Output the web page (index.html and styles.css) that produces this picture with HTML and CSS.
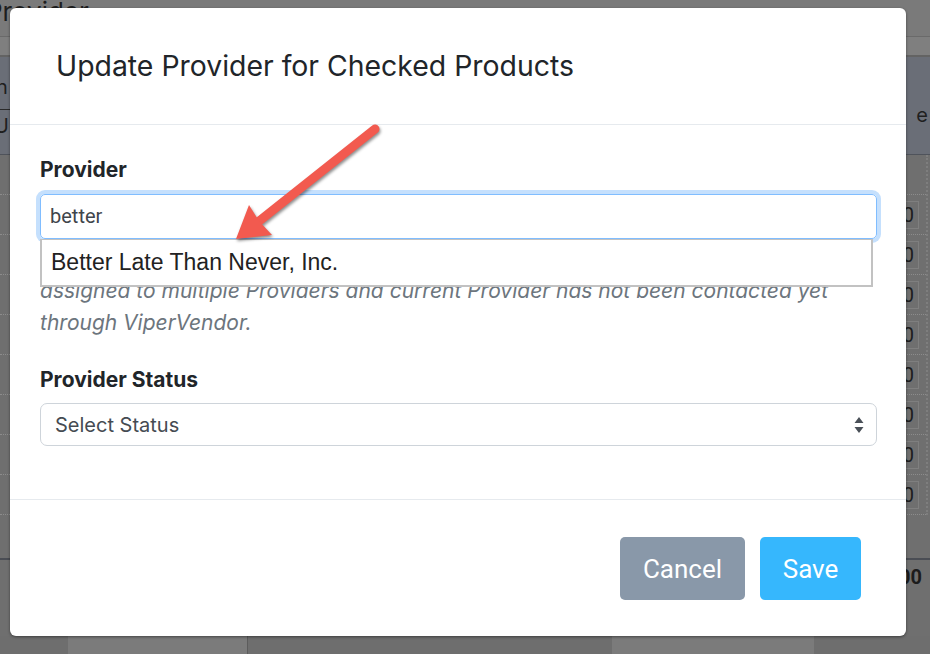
FILE: index.html
```html
<!DOCTYPE html>
<html>
<head>
<meta charset="utf-8">
<link rel="stylesheet" href="styles.css">
</head>
<body>
<div class="page">
  <div class="bg-top"><span class="bg-title">Provider</span></div>
  <div class="bg-sub"></div>
  <div class="bg-thead">
    <div class="th-left"><span class="th-n">n</span><span class="th-u">U</span></div>
    <span class="th-e">e</span>
  </div>
  <div class="bg-rows">
    <div class="row first"></div>
    <div class="row"><span class="cell">0</span></div>
    <div class="row"><span class="cell">0</span></div>
    <div class="row"><span class="cell">0</span></div>
    <div class="row"><span class="cell">0</span></div>
    <div class="row"><span class="cell">0</span></div>
    <div class="row"><span class="cell">0</span></div>
    <div class="row"><span class="cell">0</span></div>
    <div class="row"><span class="cell">0</span></div>
  </div>
  <div class="bg-gap"></div>
  <div class="bg-total"><span class="total">00</span></div>
  <div class="bg-foot">
    <span class="blk b1"></span>
    <span class="blk b2"></span>
    <span class="blk b3"></span>
  </div>
</div>

<div class="modal">
  <div class="modal-header">
    <h5 class="modal-title">Update Provider for Checked Products</h5>
  </div>
  <div class="modal-body">
    <div class="group">
      <label class="label">Provider</label>
      <div class="combo">
        <div class="input focused">better</div>
        <div class="suggest">Better Late Than Never, Inc.</div>
      </div>
      <p class="help">Provider will only be updated for the checked Products that are currently<br>assigned to multiple Providers and current Provider has not been contacted yet<br>through ViperVendor.</p>
    </div>
    <div class="group status">
      <label class="label">Provider Status</label>
      <div class="select">
        <span>Select Status</span>
        <svg class="updown" width="10" height="18" viewBox="0 0 10 18"><path d="M5 1 L9.5 7 H0.5 Z M5 17 L9.5 11 H0.5 Z" fill="#4a5058"/></svg>
      </div>
    </div>
  </div>
  <div class="modal-footer">
    <button class="btn btn-cancel">Cancel</button>
    <button class="btn btn-save">Save</button>
  </div>
</div>

<svg class="arrow" width="930" height="654" viewBox="0 0 930 654">
  <g class="arrow-g">
    <line x1="375" y1="129" x2="258" y2="222" stroke="#f25a4f" stroke-width="9" stroke-linecap="round"/>
    <polygon points="236,239 249,205 259,221 272,235" fill="#f25a4f"/>
  </g>
</svg>
</body>
</html>
```

FILE: styles.css
```css
* { box-sizing: border-box; }
html, body { margin: 0; padding: 0; }
body {
  width: 930px;
  height: 654px;
  overflow: hidden;
  background: #6f6f6f;
  font-family: Inter, Roboto, "Liberation Sans", sans-serif;
  position: relative;
}

/* background page (under the backdrop) */
.page { width: 930px; height: 654px; display: flex; flex-direction: column; }
.bg-top {
  height: 37px;
  background: #7a7a7a;
  border-bottom: 1px solid #6a6a6a;
  overflow: hidden;
  position: relative;
}
.bg-title {
  display: block;
  font-size: 26px;
  color: #1e1e1e;
  margin-left: -14px;
  margin-top: -3px;
  line-height: 30px;
}
.bg-sub { height: 20px; background: #7f7f7f; border-bottom: 2px solid #636363; }
.bg-thead {
  height: 98px;
  background: #6a6e77;
  border-bottom: 1px solid #4f535b;
  display: flex;
  justify-content: space-between;
  color: #1f1f1f;
  font-size: 20px;
}
.th-left { display: flex; flex-direction: column; width: 12px; overflow: hidden; }
.th-n { margin-left: -4px; margin-top: 18px; line-height: 24px; }
.th-u { margin-left: -6px; margin-top: 10px; line-height: 24px; border-top: 1px solid #2a2a2a; padding-top: 4px; width: 20px; }
.th-e { margin-top: 46px; margin-right: 2px; line-height: 24px; }

.bg-rows { display: flex; flex-direction: column; border-right: 2px dotted #7e7e7e; margin-right: 2px; }
.row {
  height: 40px;
  border-bottom: 1px dotted #8c8c8c;
  display: flex;
  justify-content: flex-end;
  align-items: center;
  padding-right: 7px;
}
.cell {
  width: 32px;
  height: 28px;
  border: 1px solid #7f7f7f;
  font-family: Roboto, sans-serif;
  font-size: 20px;
  line-height: 26px;
  color: #1c1c1c;
  text-align: right;
  padding-right: 4px;
}
.bg-gap { height: 45px; border-bottom: 2px solid #4a4d54; }
.bg-total {
  height: 76px;
  display: flex;
  justify-content: flex-end;
  padding-right: 8px;
}
.total { font-family: Roboto, sans-serif; font-size: 20px; font-weight: 700; color: #1c1c1c; margin-top: 5px; line-height: 24px; }
.bg-foot { height: 18px; display: flex; background: #6e6e6e; }
.blk { display: block; height: 18px; }
.b1 { width: 180px; margin-left: 68px; background: #7b7b7b; border-right: 1px solid #5c5c5c; }
.b2 { width: 364px; }
.b3 { width: 202px; background: #7b7b7b; }

/* modal */
.modal {
  position: absolute;
  left: 10px;
  top: 8px;
  width: 896px;
  height: 628px;
  background: #fff;
  border-radius: 6px;
  box-shadow: 0 1px 3px rgba(0,0,0,0.45);
  display: flex;
  flex-direction: column;
}
.modal-header {
  height: 117px;
  padding: 0 46px;
  display: flex;
  align-items: center;
  border-bottom: 1px solid #e6eaee;
}
.modal-title {
  margin: 0;
  font-size: 28.4px;
  font-weight: 400;
  color: #212529;
  line-height: 32px;
}
.modal-body {
  padding: 33px 29px 0 30px;
  height: 374px;
}
.group { display: flex; flex-direction: column; }
.label {
  font-size: 21px;
  font-weight: 700;
  color: #212529;
  line-height: 24px;
  margin-bottom: 12px;
}
.combo { position: relative; }
.input {
  height: 45px;
  border: 1.5px solid #80bdff;
  border-radius: 5px;
  box-shadow: 0 0 0 4px #c5e0fd;
  font-family: Roboto, sans-serif;
  font-size: 20px;
  line-height: 42px;
  padding-left: 9px;
  color: #3f454b;
}
.suggest {
  position: absolute;
  left: 0;
  top: 100%;
  width: 833px;
  height: 48px;
  background: #fff;
  border: 2px solid #c2c2c2;
  border-top-width: 1.5px;
  font-family: "Liberation Sans", Arial, sans-serif;
  font-size: 23px;
  line-height: 44px;
  padding-left: 9px;
  color: #222;
  z-index: 2;
}
.help {
  margin: 4px 0 0;
  font-style: italic;
  font-size: 21px;
  line-height: 32px;
  color: #6c757d;
}
.group.status { margin-top: 29px; }
.group.status .label { margin-bottom: 11px; }
.select {
  height: 43px;
  border: 1.5px solid #ced4da;
  border-radius: 7px;
  display: flex;
  align-items: center;
  justify-content: space-between;
  padding: 0 12px 0 14px;
  font-size: 20px;
  color: #454b52;
}
.updown { display: block; }

.modal-footer {
  border-top: 1px solid #e6eaee;
  padding: 37px 45px 36px;
  display: flex;
  justify-content: flex-end;
  gap: 15px;
}
.btn {
  height: 63px;
  border: none;
  border-radius: 5px;
  color: #fff;
  font-family: Roboto, "Liberation Sans", sans-serif;
  font-size: 26px;
  padding: 0;
}
.btn-cancel { width: 125px; background: #8998a9; }
.btn-save { width: 101px; background: #36b7fd; }

.arrow {
  position: absolute;
  left: 0;
  top: 0;
  pointer-events: none;
  z-index: 5;
}
.arrow-g { filter: drop-shadow(1px 2px 1.5px rgba(0,0,0,0.45)); }
```
